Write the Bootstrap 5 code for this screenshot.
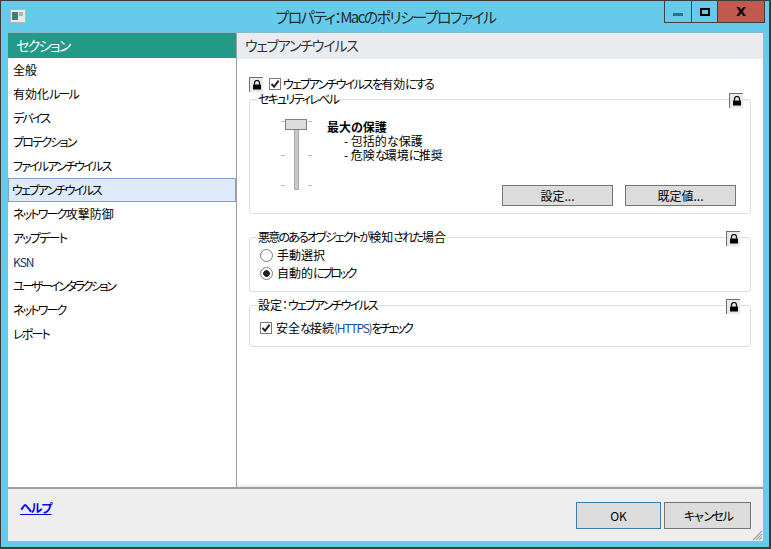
<!DOCTYPE html>
<html lang="ja">
<head>
<meta charset="utf-8">
<title>プロパティ</title>
<link rel="stylesheet" href="https://cdn.jsdelivr.net/npm/bootstrap@5.3.0/dist/css/bootstrap.min.css">
<style>
html,body{height:100%;margin:0;overflow:hidden}
body{font-family:"Noto Sans CJK JP","Liberation Sans",sans-serif;font-size:12px;line-height:14px;color:#000;font-feature-settings:"palt";background:#66cbeb}
.kn{letter-spacing:-1.8px}
.kn2{letter-spacing:-2.4px}
.win{width:771px;height:549px;border:2px solid #3c3c3c;border-top-width:1px;border-left-width:1px;background:#66cbeb;padding:0 6px 6px 7px}
.titlebar{height:31px;position:relative;flex:none}
.ticon{width:16px;height:14px;margin-left:2px;margin-top:8px;display:block}
.ttext{position:absolute;left:0;right:0;top:6px;text-align:center;font-size:15px;line-height:20px;color:#1c2b33;letter-spacing:-1.6px}
.ctrls{position:absolute;top:0;right:-2px;height:22px;border:1px solid #404040;border-top:0}
.ctl{display:flex;align-items:center;justify-content:center;height:21px}
.c1{width:27px;border-right:1px solid #404040}
.c2{width:26px;border-right:1px solid #404040}
.c3{width:46px;background:#c05a4e}
.minb{width:10px;height:3px;background:#2d6f8e;margin-top:5px}
.maxb{width:10px;height:8px;border:2px solid #000}
.closeb{font:bold 13px/1 "DejaVu Sans",sans-serif;color:#000}
.mainarea{flex:1;min-height:0;background:#fff;border-top:1px solid #84b9d0}
.side{width:229px;border-right:1px solid #a0a0a0;flex:none}
.sidehead{height:25px;background:#239a87;color:#fff;font-size:14px;line-height:24px;padding-left:8px;letter-spacing:-1.6px}
.sideitem{height:24px;line-height:24px;padding-left:5px;white-space:nowrap;color:#000}
.sideitem.cur{background:#dcebfc;border:1px solid #7da2ce;padding-left:3px;line-height:22px;width:228px}
.kb{color:#1a2f6b;letter-spacing:-1px}
.panel{flex:1;min-width:0;border-bottom:2px solid #f0f0f0}
.panelhead{height:26px;background:#e8ecef;font-size:14px;line-height:24px;padding-left:8px;color:#333;letter-spacing:-1.2px}
.panelbody{padding:17px 12px 0 12px}
.toprow{height:16px}
.lockb{width:14px;height:15px;flex:none;background:#e9e9e9;border-left:1px solid #6e6e6e;border-top:1px solid #6e6e6e;display:flex;align-items:center;justify-content:center}
.gbox{border:1px solid #d6dfe6;border-radius:3px;margin:0;padding:0;position:relative;min-width:0}
.gbox legend{float:none;width:auto;font-size:12px;line-height:14px;margin:0 0 0 7px;padding:0 1px}
.lockpos{position:absolute;top:-13px;right:7px}
.lockpos2{position:absolute;top:-13px;right:10px}
.gsec{margin-top:16px}
.gthird{margin-top:6px}
.pick{appearance:none;-webkit-appearance:none;margin:0;flex:none;background:#fff;border:1px solid #7a7a7a;width:12px;height:12px;display:block}
.pick.chk{background-repeat:no-repeat;background-position:center;background-size:10px 10px;background-image:url("data:image/svg+xml,%3Csvg xmlns='http://www.w3.org/2000/svg' viewBox='0 0 10 10'%3E%3Cpath d='M1.500 5l2.600 2.800L8.600 1.600' fill='none' stroke='%23222' stroke-width='2'/%3E%3C/svg%3E")}
.firstchk{margin-left:6px;margin-right:2px}
.pick.rad{border-radius:50%;width:13px;height:13px}
.pick.rad.on{background:radial-gradient(circle,#222 0 3px,#fff 3.6px)}
.lvl{padding:12px 14px 7px 30px;height:107px}
.slider{width:33px;height:74px;position:relative;flex:none}
.track{position:absolute;left:14px;top:7px;width:5px;height:65px;background:#c8c8c8;border:1px solid #aaa}
.thumb{position:absolute;left:5px;top:1px;width:22px;height:11px;background:#dcdcdc;border:1px solid #808080}
.tick{position:absolute;width:4px;height:1px;background:#b8b8b8}
.lvltext{margin-left:14px;flex:1}
.lvlname{font-weight:700;margin-top:2px}
.sub{padding-left:17px}
.gbtn{background:#dcdcdc;border:1px solid #757575;border-radius:0;height:21px;padding:0;font-size:12px;line-height:19px;color:#000}
.wide{width:111px}
.opt{height:18px;padding-left:10px;gap:4px}
.optlist{padding:2px 0 9px}
.optlist3{padding:7px 0 9px}
.hblue{color:#1b4fa0;letter-spacing:-1.2px}
.foot{height:54px;flex:none;background:#eee;border-top:2px solid #a0a0a0;position:relative;padding:13px 12px 0 12px}
.helplink{font-weight:700;color:#0000ee;letter-spacing:-1px;margin-top:-1px}
.okb{width:85px;height:27px;background:#dcdcdc;border:1px solid #3b7db3;border-radius:0;font-size:12px;padding:0;color:#000}
.canb{width:87px;height:27px;background:#dcdcdc;border:1px solid #757575;border-radius:0;font-size:12px;padding:0;color:#000}
.btnrow{gap:3px}
.grip{position:absolute;right:0;bottom:0;display:block}
</style>
</head>
<body>
<svg width="0" height="0" class="d-none"><symbol id="lk" viewBox="0 0 10 10"><path d="M2.500 4.500V3a2.500 2.500 0 0 1 5 0v1.500" fill="none" stroke="#000" stroke-width="1.200"/><rect x="1" y="4.500" width="8" height="5" fill="#000"/></symbol></svg>
<div class="win d-flex flex-column">
  <div class="titlebar">
    <svg class="ticon" viewBox="0 0 16 14"><rect x="0.500" y="0.500" width="15" height="13" fill="#e8e8e8" stroke="#b5b5b5"/><rect x="2" y="3" width="6" height="8" fill="#3f7f80"/><rect x="9" y="3" width="4" height="4" fill="#a9b4b8"/></svg>
    <div class="ttext">プロパティ：Macのポリシープロファイル</div>
    <div class="ctrls d-flex">
      <div class="ctl c1"><span class="minb"></span></div>
      <div class="ctl c2"><span class="maxb"></span></div>
      <div class="ctl c3"><span class="closeb">X</span></div>
    </div>
  </div>
  <div class="mainarea d-flex">
    <div class="side">
      <div class="sidehead">セクション</div>
      <div class="sideitem">全般</div>
      <div class="sideitem">有効化<span class="kn">ルール</span></div>
      <div class="sideitem"><span class="kn">デバイス</span></div>
      <div class="sideitem"><span class="kn">プロテクション</span></div>
      <div class="sideitem"><span class="kn">ファイルアンチウイルス</span></div>
      <div class="sideitem cur"><span class="kn">ウェブアンチウイルス</span></div>
      <div class="sideitem"><span class="kn">ネットワーク</span>攻撃防御</div>
      <div class="sideitem"><span class="kn">アップデート</span></div>
      <div class="sideitem kb">KSN</div>
      <div class="sideitem"><span class="kn2">ユーザーインタラクション</span></div>
      <div class="sideitem"><span class="kn">ネットワーク</span></div>
      <div class="sideitem"><span class="kn">レポート</span></div>
    </div>
    <div class="panel">
      <div class="panelhead">ウェブアンチウイルス</div>
      <div class="panelbody">
        <div class="toprow d-flex align-items-center">
          <span class="lockb"><svg width="10" height="10"><use href="#lk"/></svg></span>
          <input class="pick chk firstchk" type="checkbox" checked aria-label="有効">
          <span><span class="kn">ウェブアンチウイルスを</span>有効<span class="kn">にする</span></span>
        </div>
        <fieldset class="gbox">
          <legend><span class="kn">セキュリティレベル</span></legend>
          <span class="lockb lockpos"><svg width="10" height="10"><use href="#lk"/></svg></span>
          <div class="lvl d-flex">
            <div class="slider">
              <span class="track"></span>
              <span class="tick" style="left:1px;top:3px"></span><span class="tick" style="left:28px;top:3px"></span>
              <span class="tick" style="left:1px;top:37px"></span><span class="tick" style="left:28px;top:37px"></span>
              <span class="tick" style="left:1px;top:67px"></span><span class="tick" style="left:28px;top:67px"></span>
              <span class="thumb"></span>
            </div>
            <div class="lvltext d-flex flex-column">
              <div class="lvlname">最大の保護</div>
              <div class="sub">- 包括的な保護</div>
              <div class="sub">- 危険<span class="kn">な</span>環境<span class="kn">に</span>推奨</div>
              <div class="d-flex justify-content-end gap-2 mt-auto">
                <button class="gbtn wide" type="button">設定...</button>
                <button class="gbtn wide ms-1" type="button">既定値...</button>
              </div>
            </div>
          </div>
        </fieldset>
        <fieldset class="gbox gsec">
          <legend><span class="kn">悪意のあるオブジェクトが</span>検知<span class="kn">された</span>場合</legend>
          <span class="lockb lockpos2"><svg width="10" height="10"><use href="#lk"/></svg></span>
          <div class="optlist">
            <div class="opt d-flex align-items-center"><input class="pick rad" type="radio" name="r" aria-label="手動選択"><span>手動選択</span></div>
            <div class="opt d-flex align-items-center"><input class="pick rad on" type="radio" name="r" aria-label="自動的にブロック"><span>自動的<span class="kn2">にブロック</span></span></div>
          </div>
        </fieldset>
        <fieldset class="gbox gthird">
          <legend>設定：<span class="kn">ウェブアンチウイルス</span></legend>
          <span class="lockb lockpos2"><svg width="10" height="10"><use href="#lk"/></svg></span>
          <div class="optlist3">
            <div class="opt d-flex align-items-center"><input class="pick chk" type="checkbox" checked aria-label="HTTPS"><span>安全<span class="kn">な</span>接続<span class="hblue">(HTTPS)</span><span class="kn2">をチェック</span></span></div>
          </div>
        </fieldset>
      </div>
    </div>
  </div>
  <div class="foot d-flex justify-content-between align-items-start">
    <a class="helplink" href="#">ヘルプ</a>
    <div class="d-flex btnrow">
      <button class="okb" type="button">OK</button>
      <button class="canb" type="button"><span class="kn2">キャンセル</span></button>
    </div>
    <svg class="grip" width="11" height="11" viewBox="0 0 11 11"><path d="M10 1L1 10M10 4L4 10M10 7L7 10" stroke="#a5a5a5" stroke-width="1.200"/></svg>
  </div>
</div>
</body>
</html>
